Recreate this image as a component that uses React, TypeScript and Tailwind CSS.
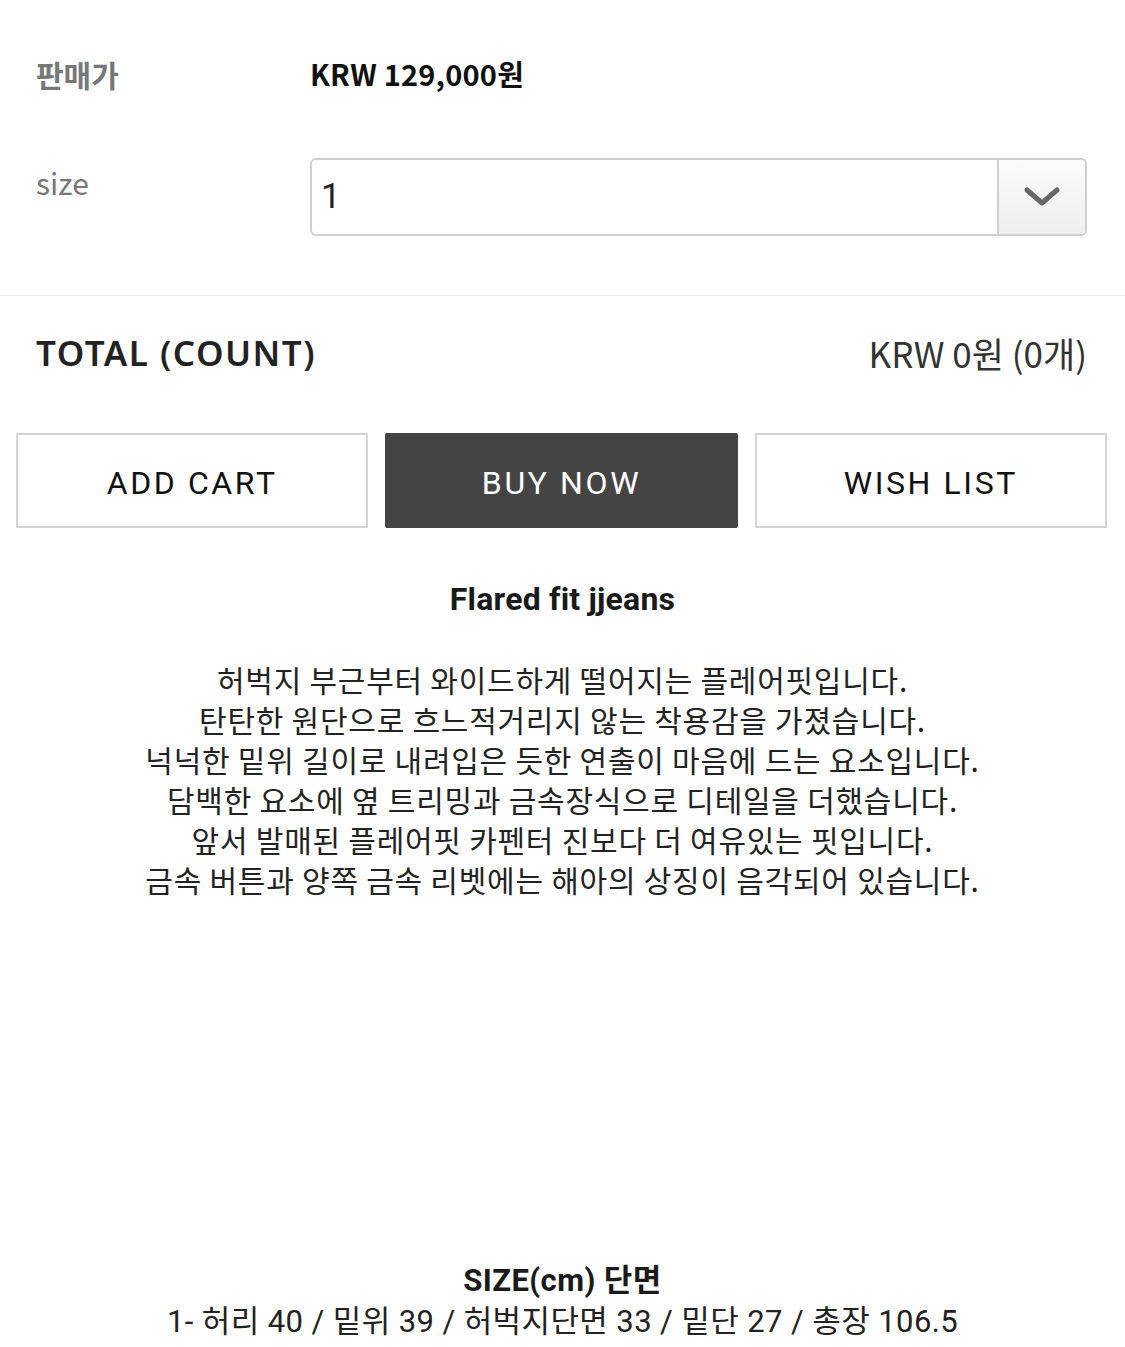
import React from "react";

const cjk = { fontFamily: '"Noto Sans CJK KR", "Noto Sans", sans-serif' };
const rob = { fontFamily: 'Roboto, "Noto Sans CJK KR", sans-serif' };
const noto = { fontFamily: '"Noto Sans", "Noto Sans CJK KR", sans-serif' };

export default function App() {
  const lines = [
    "허벅지 부근부터 와이드하게 떨어지는 플레어핏입니다.",
    "탄탄한 원단으로 흐느적거리지 않는 착용감을 가졌습니다.",
    "넉넉한 밑위 길이로 내려입은 듯한 연출이 마음에 드는 요소입니다.",
    "담백한 요소에 옆 트리밍과 금속장식으로 디테일을 더했습니다.",
    "앞서 발매된 플레어핏 카펜터 진보다 더 여유있는 핏입니다.",
    "금속 버튼과 양쪽 금속 리벳에는 해아의 상징이 음각되어 있습니다.",
  ];
  return (
    <div className="w-[1125px] min-h-[1347px] bg-white">
      {/* top info */}
      <div className="pl-[36px] pr-[38px] pt-[54px] pb-[59px] border-b border-[#ebebeb]" style={cjk}>
        <div className="flex h-[40px] items-center">
          <div className="w-[274px] text-[30px] font-bold text-[#777]">판매가</div>
          <div className="text-[29px] font-bold text-[#111] tracking-[0.2px]">KRW 129,000원</div>
        </div>
        <div className="flex items-start mt-[64px]">
          <div className="w-[274px] mt-[4px] h-[40px] leading-[40px] text-[30px] text-[#777]">size</div>
          <div className="flex-1 h-[78px] flex border-2 border-[#cfcfcf] rounded-[6px] overflow-hidden">
            <div className="flex-1 flex items-center pl-[9px] text-[35px] text-[#222]" style={rob}>1</div>
            <div className="w-[88px] border-l-2 border-[#cfcfcf] bg-gradient-to-b from-[#fbfbfb] to-[#efefef] flex items-center justify-center">
              <svg width="38" height="22" viewBox="0 0 38 22">
                <path d="M4 4 L19 17 L34 4" fill="none" stroke="#666" strokeWidth="5" strokeLinecap="round" strokeLinejoin="round" />
              </svg>
            </div>
          </div>
        </div>
      </div>

      {/* total */}
      <div className="pl-[36px] pr-[38px] pt-[37px] flex items-center justify-between h-[77px]">
        <div className="text-[35px] font-semibold text-[#222] tracking-[1.5px] leading-[40px]" style={noto}>TOTAL (COUNT)</div>
        <div className="text-[35px] text-[#333] leading-[40px]" style={cjk}>KRW 0원 (0개)</div>
      </div>

      {/* buttons */}
      <div className="pl-[16px] pr-[18px] mt-[60px] grid grid-cols-3 gap-[17px]" style={rob}>
        <div className="h-[95px] pt-[4px] border-2 border-[#d4d4d4] flex items-center justify-center text-[32px] tracking-[2.6px] text-[#111]">ADD CART</div>
        <div className="h-[95px] pt-[4px] bg-[#444444] rounded-[2px] flex items-center justify-center text-[32px] tracking-[2.6px] text-white">BUY NOW</div>
        <div className="h-[95px] pt-[4px] border-2 border-[#d4d4d4] flex items-center justify-center text-[32px] tracking-[2.6px] text-[#111]">WISH LIST</div>
      </div>

      {/* description */}
      <div className="mt-[51px] text-center text-[#222]">
        <div className="text-[32px] font-bold leading-[40px] tracking-[0.2px] text-[#1a1a1a]" style={rob}>Flared fit jjeans</div>
        <div className="mt-[40px] text-[30px] leading-[40px] tracking-[0.75px]" style={cjk}>
          {lines.map((l) => (
            <div key={l}>{l}</div>
          ))}
        </div>
        <div className="mt-[361px] text-[31px] leading-[41px] tracking-[0.4px]" style={rob}>
          <div className="font-bold text-[#1a1a1a]">SIZE(cm) 단면</div>
          <div>1- 허리 40 / 밑위 39 / 허벅지단면 33 / 밑단 27 / 총장 106.5</div>
        </div>
      </div>
    </div>
  );
}
